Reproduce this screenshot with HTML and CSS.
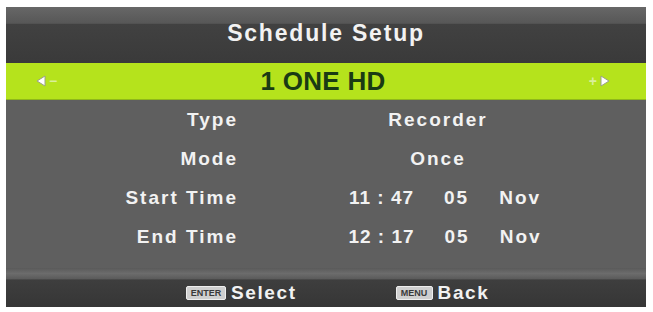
FILE: index.html
```html
<!DOCTYPE html>
<html lang="en">
<head>
  <meta charset="UTF-8">
  <title>Schedule Setup</title>
  <link rel="stylesheet" href="styles.css">
</head>
<body>
  <div class="osd">
    <div class="osd-title">Schedule Setup</div>
    <div class="channel-bar">
      <div class="nav nav-left">
        <svg width="10" height="12" viewBox="0 0 10 12"><polygon points="9,1 9,11 1,6" fill="#fff" stroke="#9aa08a" stroke-width="1"/></svg>
        <span class="sign">&minus;</span>
      </div>
      <div class="channel">1 ONE HD</div>
      <div class="nav nav-right">
        <span class="sign">+</span>
        <svg width="10" height="12" viewBox="0 0 10 12"><polygon points="1,1 1,11 9,6" fill="#fff" stroke="#9aa08a" stroke-width="1"/></svg>
      </div>
    </div>
    <div class="fields">
      <div class="label">Type</div>
      <div class="value">Recorder</div>
      <div class="label">Mode</div>
      <div class="value">Once</div>
      <div class="label">Start Time</div>
      <div class="value time"><span class="clock">11 : 47</span><span>05</span><span>Nov</span></div>
      <div class="label">End Time</div>
      <div class="value time"><span class="clock">12 : 17</span><span>05</span><span>Nov</span></div>
    </div>
    <div class="hints">
      <div class="hint"><span class="key key-enter">ENTER</span>Select</div>
      <div class="hint"><span class="key key-menu">MENU</span>Back</div>
    </div>
  </div>
</body>
</html>
```

FILE: styles.css
```css
*{
  margin: 0;
  padding: 0;
  box-sizing: border-box;
}
body{
  background: #fff;
  padding: 7px 7px 5px 6px;
  font-family: "Liberation Sans", Arial, sans-serif;
  font-weight: bold;
  color: #f2f2f2;
}
.osd{
  width: 640px;
  height: 300px;
  background: #5e5e5e;
  display: flex;
  flex-direction: column;
}
.osd-title{
  height: 56px;
  padding-bottom: 4px;
  display: flex;
  align-items: center;
  justify-content: center;
  font-size: 23px;
  letter-spacing: 1.8px;
  background: linear-gradient(#676767 0, #575757 29%, #414141 31%, #3a3a3a 100%);
}
.channel-bar{
  height: 37px;
  background: #b5e31c;
  border-bottom: 1px solid #8fb81a;
  display: flex;
  align-items: center;
  padding: 0 36px 0 30px;
}
.channel{
  flex: 1;
  text-align: center;
  font-size: 26px;
  letter-spacing: 0.3px;
  color: #1a3b14;
}
.nav{
  display: flex;
  align-items: center;
  gap: 3px;
  width: 40px;
}
.nav-right{
  justify-content: flex-end;
}
.nav svg{
  display: block;
}
.sign{
  font-size: 14px;
  color: #d9ef9a;
}
.fields{
  height: 168px;
  display: grid;
  grid-template-columns: 232px 1fr;
  grid-auto-rows: 39px;
  padding-right: 8px;
  font-size: 19px;
  letter-spacing: 2px;
  background: #5f5f5f;
}
.label,
.value{
  display: flex;
  align-items: center;
}
.label{
  justify-content: flex-end;
}
.value{
  justify-content: center;
}
.time{
  gap: 30px;
  padding-left: 14px;
}
.clock{
  letter-spacing: 1px;
}
.hints{
  flex: 1;
  display: flex;
  align-items: center;
  padding: 10px 0 0 180px;
  gap: 99px;
  font-size: 19px;
  letter-spacing: 1.6px;
  background: linear-gradient(#5a5a5a 0, #6c6c6c 14%, #5c5c5c 27%, #3e3e3e 31%, #363636 100%);
}
.hint{
  display: flex;
  align-items: center;
  gap: 5px;
}
.key{
  display: inline-block;
  height: 14px;
  line-height: 12px;
  border: 1px solid #eee;
  border-radius: 2px;
  background: #cfcfcf;
  color: #3a3a3a;
  font-size: 9px;
  letter-spacing: 0;
  text-align: center;
}
.key-enter{
  width: 40px;
}
.key-menu{
  width: 37px;
}
```
